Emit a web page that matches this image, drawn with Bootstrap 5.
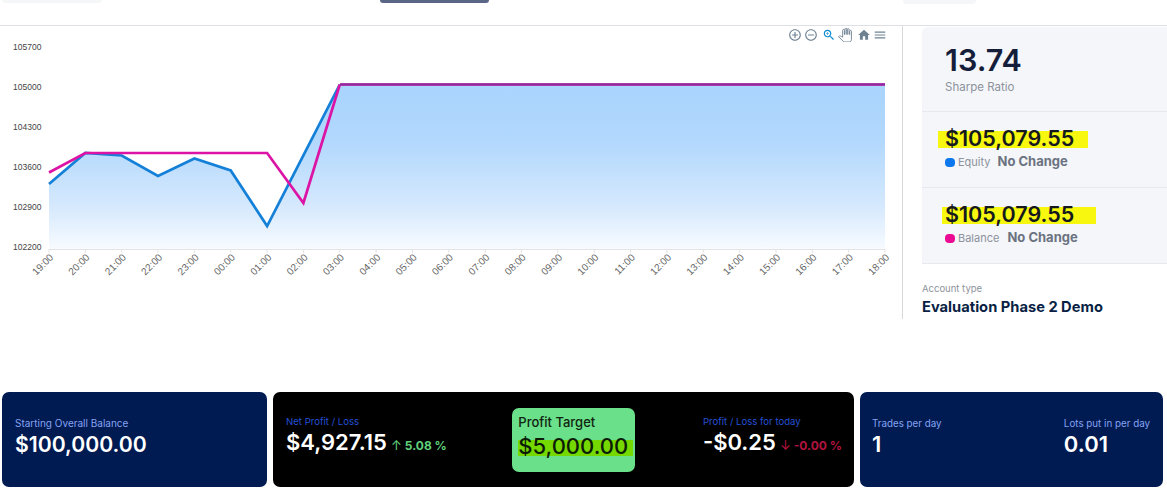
<!DOCTYPE html>
<html lang="en">
<head>
  <meta charset="UTF-8" />
  <meta name="viewport" content="width=device-width, initial-scale=1" />
  <title>Account overview</title>
  <link href="https://cdn.jsdelivr.net/npm/bootstrap@5.3.0/dist/css/bootstrap.min.css" rel="stylesheet" />
  <style>
    body { font-family: Inter, "Open Sans", sans-serif; background: #fff; overflow: hidden; }
    .top-strip { height: 26px; border-bottom: 1px solid #dcdfe3; }
    .strip-chip { height: 3px; border-radius: 0 0 4px 4px; background: #f4f6f8; }
    .chip-a { width: 100px; margin-left: 2px; }
    .chip-b { width: 109px; margin-left: 278px; background: #5a6685; }
    .chip-c { width: 73px; margin-left: 414px; height: 4px; }
    .main-row { height: 293px; margin-bottom: 73px; }
    .chart-col { width: 903px; border-right: 1px solid #d8d8d8; }
    .chart-svg { display: block; }
    .axis-text { font-family: "Liberation Sans", sans-serif; font-size: 8.5px; fill: #444; }
    .axis-text.x-label { font-size: 10px; fill: #666; }
    .chart-tools { top: 2px; left: 788px; height: 14px; gap: 2px; }
    .chart-tools svg { width: 14px; height: 14px; fill: #6e8192; flex: none; }
    .chart-tools .tool-hand { fill: #fff; stroke: #6e8192; stroke-width: 1.6px; }
    .chart-tools .tool-zoom { fill: #0d8ad0; margin-left: 2px; }
    .chart-tools .tool-home { margin-left: 3px; }
    .side-col { width: 264px; padding-left: 19px; }
    .side-panel { margin-top: 1px; background: #f4f6fa; border-top-left-radius: 6px; }
    .side-block { height: 76px; padding: 19px 0 0 23px; border-bottom: 1px solid #e7e9ef; }
    .side-block.sharpe { height: 85px; padding-top: 15px; }
    .sharpe-num { font-size: 30.5px; line-height: 36px; font-weight: 600; color: #141d3a; }
    .sharpe-label { font-size: 11.5px; line-height: 14px; color: #8d929b; margin-top: 2px; }
    .money { font-size: 21.5px; line-height: 15px; padding-bottom: 2px; font-weight: 600; color: #15191f; background: #f7f70f; white-space: nowrap; }
    .money-eq { width: 150px; margin-left: -7px; padding-left: 7px; }
    .money-bal { width: 154px; margin-left: -3px; padding-left: 3px; }
    .change-row { height: 16px; margin-top: 6px; }
    .dot { width: 10px; height: 9px; border-radius: 4px; }
    .dot-eq { background: #0d78ee; }
    .dot-bal { background: #ea0a94; }
    .dot-text { font-size: 11px; color: #8d929b; margin-left: 3px; margin-right: 7px; }
    .dot-bal + .dot-text { margin-right: 8px; }
    .no-change { font-size: 13px; font-weight: 700; color: #6b7280; }
    .acct-label { font-size: 9.5px; color: #8d929b; margin-top: 19px; line-height: 12px; }
    .acct-value { font-size: 14.7px; font-weight: 700; color: #0a1f44; line-height: 18px; margin-top: 3px; }
    .cards-row { padding: 0 4px 0 2px; gap: 6px; height: 95px; }
    .info-card { border-radius: 7px; padding: 0 13px; }
    .card-navy { background: #001a52; }
    .card-black { background: #000; }
    .card-start { width: 265px; }
    .card-mid { width: 581px; padding-right: 12px; }
    .card-end { width: 303px; padding: 0 13px 0 12px; }
    .stat-label { font-size: 10px; line-height: 13px; color: #86a3f2; }
    .card-black .stat-label { font-size: 9.6px; color: #2450d6; }
    .card-end .stat-label { font-size: 9.8px; }
    .stat-value { font-size: 22px; line-height: 26px; font-weight: 600; color: #fff; margin-top: 1px; white-space: nowrap; }
    .card-start .stat-value { font-size: 21.2px; }
    .stat-col { margin-top: -6px; }
    .delta { font-size: 12px; font-weight: 700; }
    .delta-up { color: #5fd07a; }
    .delta-down { color: #b3143f; }
    .delta-arrow { font-size: 13px; font-weight: 400; margin: 0 3px 0 4px; }
    .target-box { width: 123px; height: 64px; background: #69e089; border-radius: 7px; padding: 6px 0 0 6px; margin: 0 2px 0 0; }
    .target-label { font-size: 13px; line-height: 17px; font-weight: 500; color: #10240f; }
    .target-value { font-size: 22px; line-height: 13px; padding-bottom: 3px; font-weight: 500; color: #0b1c09; background: #75d900; width: 115px; margin-top: 9px; }
  </style>
</head>
<body>
  <div class="top-strip d-flex align-items-start">
    <div class="strip-chip chip-a"></div>
    <div class="strip-chip chip-b"></div>
    <div class="strip-chip chip-c"></div>
  </div>

  <div class="main-row d-flex">
    <div class="chart-col position-relative">
      <div class="chart-tools position-absolute d-flex align-items-center">
        <svg viewBox="0 0 24 24"><path d="M13 7h-2v4H7v2h4v4h2v-4h4v-2h-4V7zm-1-5C6.48 2 2 6.48 2 12s4.48 10 10 10 10-4.48 10-10S17.52 2 12 2zm0 18c-4.41 0-8-3.59-8-8s3.59-8 8-8 8 3.59 8 8-3.59 8-8 8z"/></svg>
        <svg viewBox="0 0 24 24"><path d="M7 11v2h10v-2H7zm5-9C6.48 2 2 6.48 2 12s4.48 10 10 10 10-4.48 10-10S17.52 2 12 2zm0 18c-4.41 0-8-3.59-8-8s3.59-8 8-8 8 3.59 8 8-3.59 8-8 8z"/></svg>
        <svg class="tool-zoom" viewBox="0 0 24 24"><path d="M15.5 14h-.79l-.28-.27C15.41 12.59 16 11.11 16 9.5 16 5.91 13.09 3 9.5 3S3 5.91 3 9.5 5.91 16 9.5 16c1.61 0 3.09-.59 4.23-1.57l.27.28v.79l5 4.99L20.49 19l-4.99-5zm-6 0C7.01 14 5 11.99 5 9.5S7.01 5 9.5 5 14 7.01 14 9.5 11.99 14 9.5 14z"/><path d="M12 10h-2v2H9v-2H7V9h2V7h1v2h2v1z"/></svg>
        <svg class="tool-hand" viewBox="0 0 24 24"><path d="M23 5.5V20c0 2.2-1.8 4-4 4h-7.3c-1.08 0-2.1-.43-2.85-1.19L1 14.83s1.26-1.23 1.3-1.25c.22-.19.49-.29.79-.29.22 0 .42.06.6.16.04.01 4.31 2.46 4.31 2.46V4c0-.83.67-1.5 1.5-1.5S11 3.17 11 4v7h1V1.5c0-.83.67-1.5 1.5-1.5S15 .67 15 1.5V11h1V2.5c0-.83.67-1.5 1.5-1.5s1.5.67 1.5 1.5V11h1V5.5c0-.83.67-1.5 1.5-1.5s1.5.67 1.5 1.5z"/></svg>
        <svg class="tool-home" viewBox="0 0 24 24"><path d="M10 20v-6h4v6h5v-8h3L12 3 2 12h3v8z"/></svg>
        <svg viewBox="0 0 24 24"><path d="M3 18h18v-2H3v2zm0-5h18v-2H3v2zm0-7v2h18V6H3z"/></svg>
      </div>
      <svg id="equityChart" class="chart-svg" width="902" height="293" viewBox="0 26 902 293"></svg>
    </div>

    <div class="side-col">
      <div class="side-panel">
        <div class="side-block sharpe">
          <div class="sharpe-num">13.74</div>
          <div class="sharpe-label">Sharpe Ratio</div>
        </div>
        <div class="side-block">
          <div class="money money-eq">$105,079.55</div>
          <div class="change-row d-flex align-items-center">
            <span class="dot dot-eq"></span><span class="dot-text">Equity</span><span class="no-change">No Change</span>
          </div>
        </div>
        <div class="side-block">
          <div class="money money-bal">$105,079.55</div>
          <div class="change-row d-flex align-items-center">
            <span class="dot dot-bal"></span><span class="dot-text">Balance</span><span class="no-change">No Change</span>
          </div>
        </div>
      </div>
      <div class="acct-label">Account type</div>
      <div class="acct-value">Evaluation Phase 2 Demo</div>
    </div>
  </div>

  <div class="cards-row d-flex">
    <div class="info-card card-navy card-start d-flex align-items-center">
      <div class="stat-col">
        <div class="stat-label">Starting Overall Balance</div>
        <div class="stat-value">$100,000.00</div>
      </div>
    </div>
    <div class="info-card card-black card-mid d-flex align-items-center justify-content-between">
      <div class="stat-col">
        <div class="stat-label">Net Profit / Loss</div>
        <div class="stat-value">$4,927.15<span class="delta delta-up"><span class="delta-arrow">↑</span>5.08 %</span></div>
      </div>
      <div class="target-box">
        <div class="target-label">Profit Target</div>
        <div class="target-value">$5,000.00</div>
      </div>
      <div class="stat-col">
        <div class="stat-label">Profit / Loss for today</div>
        <div class="stat-value">-$0.25<span class="delta delta-down"><span class="delta-arrow">↓</span>-0.00 %</span></div>
      </div>
    </div>
    <div class="info-card card-navy card-end d-flex align-items-center justify-content-between">
      <div class="stat-col">
        <div class="stat-label">Trades per day</div>
        <div class="stat-value">1</div>
      </div>
      <div class="stat-col">
        <div class="stat-label">Lots put in per day</div>
        <div class="stat-value">0.01</div>
      </div>
    </div>
  </div>

  <script>
    // hourly samples, already as y positions on the plot
    const hours = ['19:00','20:00','21:00','22:00','23:00','00:00','01:00','02:00','03:00','04:00','05:00','06:00',
                   '07:00','08:00','09:00','10:00','11:00','12:00','13:00','14:00','15:00','16:00','17:00','18:00'];
    const equity = [184,153,155.5,176,158.5,170.5,226,155.3,84.5];
    const balance = [172.5,153,153,153,153,153,153,203,84.5];
    const left = 49, step = (885 - left) / 23, base = 249;
    const xAt = i => (left + i * step).toFixed(1);
    const line = ys => ys.map((y, i) => xAt(i) + ',' + y).join(' ');

    let out = `<defs><linearGradient id="eqFill" x1="0" y1="84" x2="0" y2="249" gradientUnits="userSpaceOnUse">
      <stop offset="0" stop-color="#a9d4fd"/><stop offset="0.35" stop-color="#b2d8fd"/>
      <stop offset="0.75" stop-color="#d6e9fd"/><stop offset="1" stop-color="#f8fbff"/></linearGradient></defs>`;

    const eqTail = line(equity) + ' ' + xAt(23) + ',84.5';
    out += `<polygon fill="url(#eqFill)" points="${left},${base} ${eqTail} 885,${base}"/>`;

    [[47,'105700'],[86.5,'105000'],[126.5,'104300'],[166.5,'103600'],[206.5,'102900'],[246.5,'102200']].forEach(t => {
      out += `<text class="axis-text" x="13" y="${t[0] + 3}">${t[1]}</text>`;
    });

    out += `<line x1="${left}" x2="885" y1="${base}.5" y2="${base}.5" stroke="#e3e3e3"/>`;
    hours.forEach((h, i) => {
      const x = xAt(i);
      out += `<line x1="${x}" x2="${x}" y1="${base}" y2="${base + 4}" stroke="#e3e3e3"/>`;
      out += `<text class="axis-text x-label" text-anchor="end" transform="translate(${+x + 5} ${base + 9}) rotate(-45)">${h}</text>`;
    });

    out += `<polyline fill="none" stroke="#1480d8" stroke-width="2.7" points="${line(equity)}"/>`;
    out += `<polyline fill="none" stroke="#dc14a6" stroke-width="2.7" points="${line(balance)}"/>`;
    out += `<line x1="340" x2="885" y1="84.5" y2="84.5" stroke="#c84cc0" stroke-width="3.2"/>`;
    out += `<line x1="340" x2="885" y1="84.5" y2="84.5" stroke="#8c2a9c" stroke-width="2"/>`;

    document.getElementById('equityChart').innerHTML = out;
  </script>
  <script src="https://cdn.jsdelivr.net/npm/bootstrap@5.3.0/dist/js/bootstrap.bundle.min.js"></script>
</body>
</html>
